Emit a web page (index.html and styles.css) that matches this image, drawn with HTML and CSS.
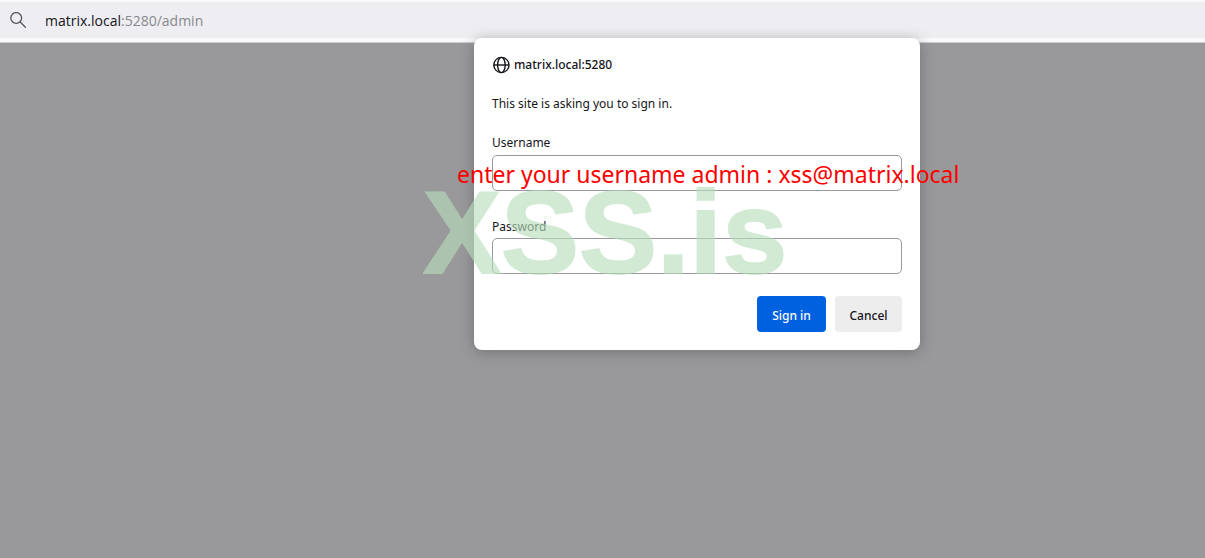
FILE: index.html
```html
<!DOCTYPE html>
<html lang="en">
<head>
<meta charset="utf-8">
<title>matrix.local:5280/admin</title>
<link rel="stylesheet" href="styles.css">
</head>
<body>
<header class="toolbar">
  <div class="urlbar">
    <svg class="search-icon" viewBox="0 0 16 16" fill="none" stroke="#55555d" stroke-width="1.3" stroke-linecap="round" aria-hidden="true"><circle cx="6.2" cy="6" r="5.4"/><path d="M10.2 10l5.2 5.2"/></svg>
    <div class="url"><span class="host">matrix.local</span>:5280/admin</div>
  </div>
</header>
<main class="page">
  <form class="dialog" role="dialog" aria-labelledby="origin">
    <div class="origin">
      <svg class="globe" viewBox="0 0 18 18" fill="none" stroke="#15141a" stroke-width="1.4" aria-hidden="true"><circle cx="9.4" cy="9" r="7.6"/><ellipse cx="9.4" cy="9" rx="3.8" ry="7.6"/><path d="M1.8 9h15.2"/></svg>
      <span id="origin">matrix.local:5280</span>
    </div>
    <p class="message">This site is asking you to sign in.</p>
    <label class="label" for="username">Username</label>
    <input class="field" id="username" type="text">
    <label class="label label-password" for="password">Password</label>
    <input class="field" id="password" type="password">
    <div class="actions">
      <button class="button primary" type="submit">Sign in</button>
      <button class="button" type="button">Cancel</button>
    </div>
    <div class="note">enter your username admin : xss@matrix.local</div>
    <div class="watermark">XSS.is</div>
  </form>
</main>
</body>
</html>
```
FILE: styles.css
```css
* {
  box-sizing: border-box;
}

body {
  margin: 0;
  min-height: 100vh;
  display: flex;
  flex-direction: column;
  background: #99999b;
  color: #15141a;
  font-family: "Noto Sans", sans-serif;
  font-size: 12px;
}

.toolbar {
  padding: 2px 0 4px;
  background: #f9f9fb;
  border-bottom: 1px solid #cccccd;
}

.urlbar {
  display: flex;
  align-items: center;
  gap: 19px;
  height: 36px;
  padding: 0 10px;
  background: #eeeef2;
}

.search-icon {
  width: 16px;
  height: 16px;
}

.url {
  color: #88888d;
  font-family: "Open Sans", sans-serif;
  font-size: 14px;
}

.host {
  color: #15141a;
}

.page {
  position: relative;
  flex: 1;
}

.dialog {
  position: absolute;
  top: -5px;
  left: 474px;
  width: 446px;
  padding: 18px;
  display: flex;
  flex-direction: column;
  background: #fff;
  border-radius: 8px;
  box-shadow: 0 2px 14px rgba(58, 57, 68, 0.4);
}

.origin {
  display: flex;
  align-items: center;
  gap: 4px;
  height: 18px;
  font-size: 12px;
  font-weight: 500;
  line-height: 16px;
}

.globe {
  width: 18px;
  height: 18px;
}

.message {
  margin: 21px 0 20px;
  line-height: 18px;
}

.label {
  margin-bottom: 2px;
  line-height: 20px;
}

.label-password {
  margin-top: 26px;
  margin-bottom: 1px;
}

.field {
  width: 100%;
  height: 36px;
  padding: 0 8px;
  border: 1px solid #98989d;
  border-radius: 5px;
  background: #fff;
  font: inherit;
}

.actions {
  display: flex;
  justify-content: flex-end;
  gap: 9px;
  margin-top: 22px;
}

.button {
  min-width: 67px;
  height: 36px;
  padding: 2px 14px 0;
  border: 0;
  border-radius: 4px;
  background: #ededee;
  color: #15141a;
  font: 500 12px "Noto Sans", sans-serif;
}

.primary {
  min-width: 69px;
  background: #0061e0;
  color: #fbfbfe;
}

.note {
  position: absolute;
  top: 120px;
  left: -17px;
  color: #f00;
  font-family: "Noto Sans", sans-serif;
  font-size: 23px;
  line-height: 32px;
  white-space: nowrap;
  pointer-events: none;
}

.watermark {
  position: absolute;
  top: 129px;
  left: -51px;
  color: #b8debb;
  opacity: 0.63;
  -webkit-text-stroke: 2px #b8debb;
  font-family: "Liberation Sans", Arial, sans-serif;
  font-size: 117px;
  font-weight: 700;
  line-height: 132px;
  pointer-events: none;
}
```
